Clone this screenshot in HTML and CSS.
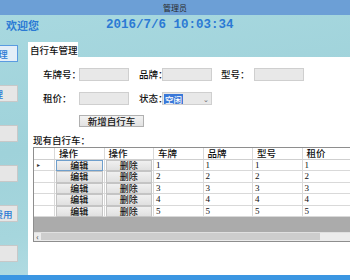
FILE: index.html
```html
<!DOCTYPE html>
<html lang="zh-CN">
<head>
	<meta charset="utf-8">
	<title>管理员</title>
	<link rel="stylesheet" href="styles.css">
</head>
<body>

<div class="window">
    <div class="titlebar">管理员</div>

    <div class="header">
        <span class="welcome">欢迎您</span>
        <span class="clock">2016/7/6 10:03:34</span>
    </div>

    <div class="main">
        <div class="sidebar">
            <button class="navbtn focus">自行车管理</button>
            <button class="navbtn">用户管理</button>
            <button class="navbtn">租车</button>
            <button class="navbtn">还车</button>
            <button class="navbtn">查询租车费用</button>
            <button class="navbtn">退出</button>
        </div>

        <div class="tabs">
            <div class="tabstrip"><div class="tab">自行车管理</div></div>
            <div class="tabpage">
                <div class="formrow">
                    <label class="lbl l1">车牌号：</label><input class="field">
                    <label class="lbl l2">品牌：</label><input class="field">
                    <label class="lbl l3">型号：</label><input class="field">
                </div>
                <div class="formrow">
                    <label class="lbl l1">租价：</label><input class="field">
                    <label class="lbl l2">状态：</label>
                    <div class="select"><span class="sel">空闲</span><span class="arrow">&#8964;</span></div>
                </div>
                <button class="addbtn">新增自行车</button>

                <div class="caption">现有自行车：</div>

                <div class="grid">
                    <div class="row head">
                        <div class="rh"></div>
                        <div class="c">操作</div>
                        <div class="c">操作</div>
                        <div class="c">车牌</div>
                        <div class="c">品牌</div>
                        <div class="c">型号</div>
                        <div class="c wide">租价</div>
                    </div>
                    <div id="rows"></div>
                    <div class="empty"></div>
                    <div class="hscroll"><span class="left">&lsaquo;</span><div class="thumb"></div></div>
                </div>
            </div>
        </div>
    </div>

    <div class="taskbar"></div>
</div>

<script>
// Fill the data grid with the bike rows
var bikes = [1, 2, 3, 4, 5];
var elrows = document.getElementById("rows");
bikes.forEach(function(n, i){
    var row = document.createElement("div");
    row.className = "row";
    row.innerHTML =
        '<div class="rh">' + (i == 0 ? '&#9656;' : '') + '</div>' +
        '<div class="c btncell"><span class="cellbtn' + (i == 0 ? ' focus' : '') + '">编辑</span></div>' +
        '<div class="c btncell"><span class="cellbtn">删除</span></div>' +
        '<div class="c num">' + n + '</div>' +
        '<div class="c num">' + n + '</div>' +
        '<div class="c num">' + n + '</div>' +
        '<div class="c num wide">' + n + '</div>';
    elrows.appendChild(row);
});
</script>

</body>
</html>
```

FILE: styles.css
```css
body {
    margin: 0;
    font-family: "Noto Sans CJK SC", sans-serif;
    font-size: 9.5px;
    font-weight: 500;
    color: #111;
}
.window {
    width: 350px;
    height: 280px;
    overflow: hidden;
    display: flex;
    flex-direction: column;
    background: linear-gradient(170deg, #a9d9e0 0%, #9fd2da 45%, #a6d6dd 70%, #bfe2e8 100%);
}
.titlebar {
    height: 15px;
    line-height: 15px;
    background: #6c9fd6;
    color: #2a2a2a;
    font-size: 8px;
    font-weight: normal;
    text-align: center;
}
.header {
    height: 27px;
    display: flex;
    align-items: flex-start;
    padding-top: 3px;
    box-sizing: border-box;
}
.welcome {
    margin-left: 6px;
    font-size: 11px;
    font-weight: bold;
    color: #2b7ad4;
    line-height: 14px;
}
.clock {
    margin-left: 67px;
    font-family: "Liberation Mono", monospace;
    font-size: 12.5px;
    font-weight: bold;
    color: #2b7ad4;
    line-height: 14px;
}
.main {
    flex: 1;
    display: flex;
    min-height: 0;
}
.sidebar {
    width: 28px;
    flex: none;
    padding-top: 3px;
    display: flex;
    flex-direction: column;
    gap: 23px;
}
/* the nav buttons sit mostly off the left edge of the window */
.navbtn {
    width: 68px;
    height: 17px;
    margin-left: -50px;
    padding: 0;
    border: 1px solid #c8c8c8;
    background: #e6e6e6;
    font: inherit;
    color: #2b7ad4;
    white-space: nowrap;
    text-align: center;
}
.navbtn.focus { border-color: #5a9be0; background: #e4eef8; }
.tabs {
    flex: 1;
    display: flex;
    flex-direction: column;
    min-width: 0;
}
.tabstrip { height: 15px; display: flex; }
.tab {
    width: 50px;
    background: #fff;
    padding: 2px 0 0 2px;
    box-sizing: border-box;
    line-height: 12px;
}
.tabpage {
    flex: 1;
    background: #fff;
    padding-top: 11px;
}
.formrow {
    display: flex;
    align-items: center;
    height: 13px;
    margin-bottom: 11px;
    padding-left: 15px;
}
.lbl { line-height: 13px; white-space: nowrap; }
.l1 { width: 36px; }
.l2 { width: 23px; margin-left: 10px; }
.l3 { width: 33px; margin-left: 9px; }
.field, .select {
    width: 50px;
    height: 13px;
    box-sizing: border-box;
    border: 1px solid #cfcfcf;
    background: #e8e8e8;
    padding: 0;
    margin: 0;
}
.select {
    display: flex;
    align-items: center;
}
.sel {
    background: #3a78d8;
    color: #fff;
    font-size: 8.5px;
    line-height: 10px;
    margin-left: 1px;
    padding: 0 1px;
}
.arrow {
    margin-left: auto;
    margin-right: 2px;
    font-size: 7px;
    color: #666;
    line-height: 8px;
}
.addbtn {
    display: block;
    margin: -1px 0 0 51px;
    width: 65px;
    height: 12px;
    padding: 0;
    border: 1px solid #b0b0b0;
    background: linear-gradient(#f2f2f2, #e2e2e2);
    font: inherit;
    color: #111;
    line-height: 10px;
}
.caption {
    margin: 7px 0 0 5px;
    line-height: 12px;
    height: 12px;
}
.grid {
    margin: 1px 0 0 5px;
    width: 330px;
    border: 1px solid #8e8e8e;
    border-right: none;
    background: #fff;
}
.row {
    display: flex;
    height: 11.4px;
    box-sizing: border-box;
    border-bottom: 1px solid #d9d9d9;
}
.row.head { height: 12px; border-bottom: 1px solid #cfcfcf; }
.rh {
    width: 21px;
    flex: none;
    border-right: 1px solid #d9d9d9;
    font-size: 6px;
    line-height: 10px;
    padding-left: 3px;
    box-sizing: border-box;
    color: #333;
}
.c {
    width: 49.5px;
    flex: none;
    box-sizing: border-box;
    border-right: 1px solid #d9d9d9;
    padding-left: 3px;
    line-height: 11px;
    white-space: nowrap;
}
.c.wide { width: 60px; }
.head .c { padding-left: 4px; }
.num {
    font-family: "Liberation Serif", serif;
    font-size: 9px;
    line-height: 10px;
    padding-left: 2px;
}
.btncell { padding: 0 1px; }
.cellbtn {
    display: block;
    height: 9.4px;
    border: 1px solid #c4c4c4;
    background: linear-gradient(#f0f0f0, #e0e0e0);
    text-align: center;
    line-height: 9px;
    font-size: 9px;
    overflow: hidden;
}
.cellbtn.focus { border-color: #6f9fcc; }
.empty {
    height: 15px;
    background: #ababab;
}
.hscroll {
    height: 8px;
    background: #ececec;
    display: flex;
    align-items: center;
    border-top: 1px solid #e0e0e0;
}
.left {
    width: 7px;
    font-size: 8px;
    line-height: 8px;
    text-align: center;
    color: #555;
}
.thumb {
    width: 279px;
    height: 7px;
    background: #cdcdcd;
}
.taskbar {
    height: 5px;
    background: #3b96e2;
}
```
